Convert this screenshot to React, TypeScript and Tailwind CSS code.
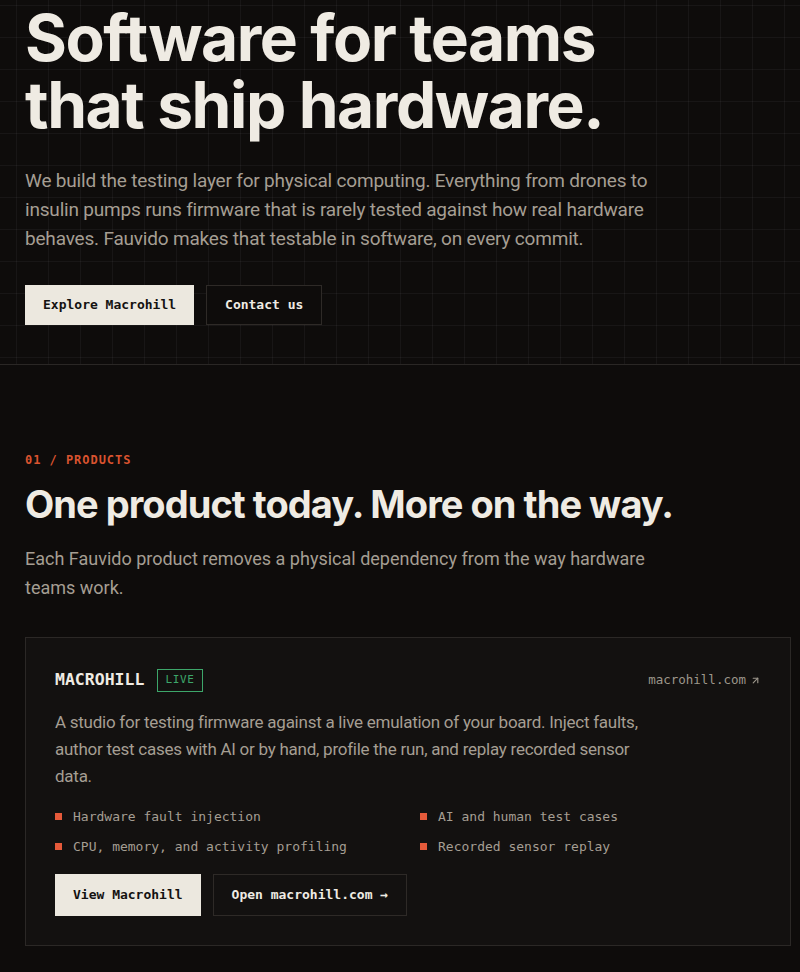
import { ArrowUpRight } from 'lucide-react';

const features = [
  'Hardware fault injection',
  'AI and human test cases',
  'CPU, memory, and activity profiling',
  'Recorded sensor replay',
];

export default function App() {
  return (
    <div className="min-h-screen bg-[#0e0c0b] text-[#eeeae2] font-['Roboto',sans-serif] overflow-hidden">
      {/* hero with faint blueprint grid */}
      <section className="h-[365px] border-b border-[#2a2725] bg-[#0e0c0b] bg-[linear-gradient(to_right,rgba(255,255,255,0.045)_1px,transparent_1px),linear-gradient(to_bottom,rgba(255,255,255,0.045)_1px,transparent_1px)] bg-[size:32px_32px] bg-[position:16px_5px] px-[25px] pt-[4px]">
        <h1 className="font-['Inter',sans-serif] text-[64px] leading-[67px] font-bold tracking-[-0.022em] text-[#efebe3]">
          Software for teams
          <br />
          that ship hardware.
        </h1>
        <p className="mt-[28px] max-w-[640px] text-[19px] leading-[29px] tracking-[-0.01em] text-[#a59e93]">
          We build the testing layer for physical computing. Everything from drones to insulin pumps runs firmware
          that is rarely tested against how real hardware behaves. Fauvido makes that testable in software, on every
          commit.
        </p>
        <div className="mt-[32px] flex gap-[12px] font-['DejaVu_Sans_Mono',monospace] text-[13px] font-bold">
          <button className="h-[40px] px-[18px] bg-[#ece8df] text-[#141211]">Explore Macrohill</button>
          <button className="h-[40px] px-[18px] border border-[#2e2a27] bg-[#0e0c0b] text-[#efebe3]">Contact us</button>
        </div>
      </section>

      <section className="pt-[86px] pl-[25px] pr-[9px] pb-[26px]">
        <div className="font-['DejaVu_Sans_Mono',monospace] text-[12px] font-bold tracking-[0.08em] text-[#d9532f]">
          01 / PRODUCTS
        </div>
        <h2 className="mt-[11px] font-['Inter',sans-serif] text-[38px] leading-[48px] font-bold tracking-[-0.025em] text-[#efebe3]">
          One product today. More on the way.
        </h2>
        <p className="mt-[16px] max-w-[650px] text-[18px] leading-[29px] text-[#a59e93]">
          Each Fauvido product removes a physical dependency from the way hardware teams work.
        </p>

        <div className="mt-[35px] border border-[#2b2826] bg-[#131110] px-[29px] pt-[30px] pb-[29px]">
          <div className="flex items-center justify-between">
            <div className="flex items-center gap-[13px]">
              <span className="font-['DejaVu_Sans_Mono',monospace] text-[16.5px] font-bold text-[#efebe3]">MACROHILL</span>
              <span className="h-[23px] px-[7px] flex items-center border border-[#3da66a] font-['DejaVu_Sans_Mono',monospace] text-[11px] tracking-[0.06em] text-[#3da66a]">
                LIVE
              </span>
            </div>
            <span className="flex items-center gap-[4px] font-['DejaVu_Sans_Mono',monospace] text-[12.5px] text-[#9d978c]">
              macrohill.com
              <ArrowUpRight className="w-[11px] h-[11px]" strokeWidth={2.5} />
            </span>
          </div>

          <p className="mt-[16px] max-w-[600px] text-[17px] leading-[27px] tracking-[-0.015em] text-[#a59e93]">
            A studio for testing firmware against a live emulation of your board. Inject faults, author test cases with
            AI or by hand, profile the run, and replay recorded sensor data.
          </p>

          <ul className="mt-[18px] grid grid-cols-2 gap-x-[24px] gap-y-[12px] font-['DejaVu_Sans_Mono',monospace] text-[13px] text-[#a59e93]">
            {features.map((f) => (
              <li key={f} className="flex items-center gap-[11px] h-[18px]">
                <span className="w-[7px] h-[7px] bg-[#e55a3a] shrink-0" />
                {f}
              </li>
            ))}
          </ul>

          <div className="mt-[18px] flex gap-[12px] font-['DejaVu_Sans_Mono',monospace] text-[13px] font-bold">
            <button className="h-[42px] px-[18px] bg-[#ece8df] text-[#141211]">View Macrohill</button>
            <button className="h-[42px] px-[18px] border border-[#2e2a27] bg-[#131110] text-[#efebe3]">
              Open macrohill.com →
            </button>
          </div>
        </div>
      </section>
    </div>
  );
}
